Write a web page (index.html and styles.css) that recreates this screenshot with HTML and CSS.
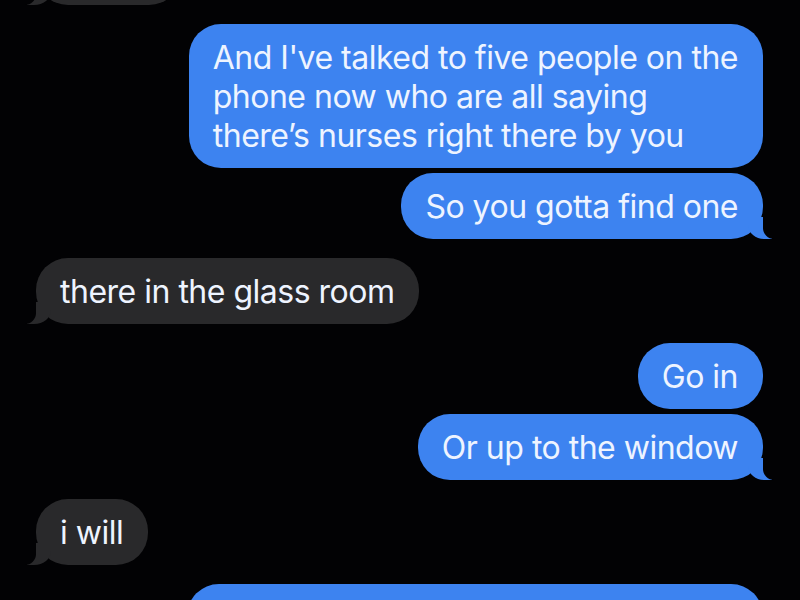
FILE: index.html
```html
<!DOCTYPE html>
<html>
<head>
  <title>Messages</title>
  <link rel="stylesheet" href="styles.css">
</head>

<body>

<div class="screen">
  <div class="thread">

    <div class="msg them tail">I know</div>

    <div class="msg me">And I've talked to five people on the<br>phone now who are all saying<br>there’s nurses right there by you</div>
    <div class="msg me same tail">So you gotta find one</div>

    <div class="msg them tail">there in the glass room</div>

    <div class="msg me">Go in</div>
    <div class="msg me same tail">Or up to the window</div>

    <div class="msg them tail">i will</div>

    <div class="msg me">Just tell them you need help now ok</div>

  </div>
</div>

</body>
</html>
```

FILE: styles.css
```css
*{
  box-sizing: border-box;
}

body{
  margin: 0;
  background-color: #020204;
  font-family: Inter, "Noto Sans", sans-serif;
}

.screen{
  width: 800px;
  height: 600px;
  overflow: hidden;
}

.thread{
  display: flex;
  flex-direction: column;
  padding: 0 37px 0 36px;
  margin-top: -80px;
}

.msg{
  position: relative;
  max-width: 620px;
  margin-top: 19px;
  padding: 13.5px 25px 13.5px 24px;
  border-radius: 32px;
  font-size: 32px;
  letter-spacing: -0.5px;
  line-height: 39px;
  color: #eef4ff;
  white-space: nowrap;
}

.msg.same{
  margin-top: 5px;
}

.me{
  align-self: flex-end;
  background-color: #3d83f0;
}

.them{
  align-self: flex-start;
  background-color: #29292b;
}

/* little tails under the last bubble of a group */
.me.tail::before{
  content: "";
  position: absolute;
  bottom: 0;
  right: -9px;
  width: 24px;
  height: 22px;
  background-color: #3d83f0;
  border-bottom-left-radius: 17px 14px;
}

.me.tail::after{
  content: "";
  position: absolute;
  bottom: 0;
  right: -13px;
  width: 13px;
  height: 22px;
  background-color: #020204;
  border-bottom-left-radius: 11px;
}

.them.tail::before{
  content: "";
  position: absolute;
  bottom: 0;
  left: -9px;
  width: 24px;
  height: 22px;
  background-color: #29292b;
  border-bottom-right-radius: 17px 14px;
}

.them.tail::after{
  content: "";
  position: absolute;
  bottom: 0;
  left: -13px;
  width: 13px;
  height: 22px;
  background-color: #020204;
  border-bottom-right-radius: 11px;
}
```
